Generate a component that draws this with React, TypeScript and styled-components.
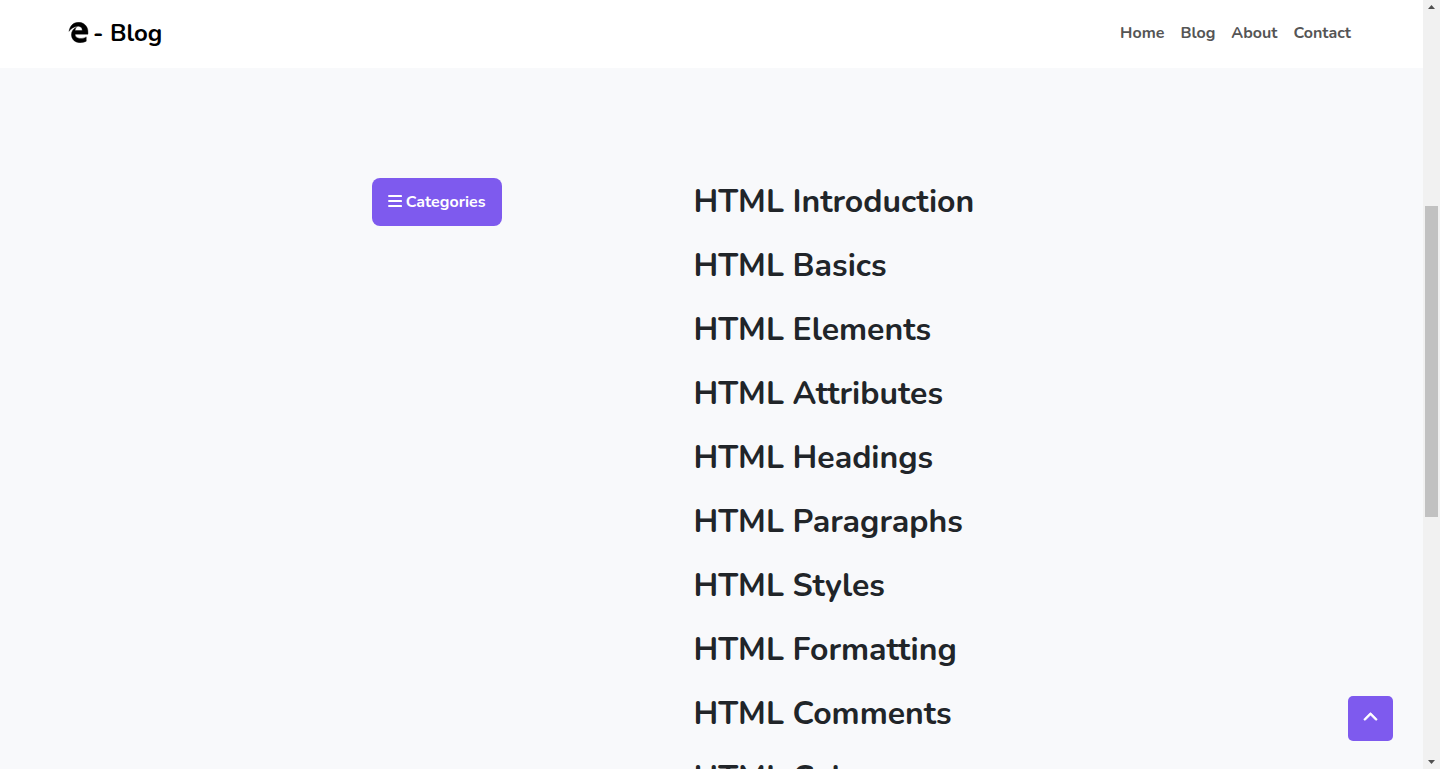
import React from "react";
import styled, { createGlobalStyle } from "styled-components";
import { FaEdgeLegacy } from "react-icons/fa";
import { FaBars, FaChevronUp } from "react-icons/fa6";

const GlobalStyle = createGlobalStyle`
  *, *::before, *::after { box-sizing: border-box; }
  body {
    margin: 0;
    background: #f8f9fb;
    color: #212529;
    font-family: Nunito, "Open Sans", "Noto Sans", sans-serif;
    font-size: 16px;
  }
`;

const Shell = styled.div`
  display: grid;
  grid-template-columns: 1fr 17px;
  height: 100vh;
  overflow: hidden;
`;

const Page = styled.div`
  display: flex;
  flex-direction: column;
  min-height: 0;
  overflow: hidden;
`;

const Header = styled.header`
  flex: none;
  display: flex;
  align-items: center;
  justify-content: space-between;
  height: 68px;
  padding: 0 72px 2px 68px;
  background: #fff;
`;

const Brand = styled.a`
  display: flex;
  align-items: center;
  gap: 4px;
  color: #000;
  font-size: 24px;
  line-height: 36px;
  font-weight: 700;
  text-decoration: none;

  svg {
    font-size: 21px;
    margin-bottom: 2px;
  }
`;

const Nav = styled.nav`
  display: flex;
  gap: 16px;
`;

const NavLink = styled.a`
  color: #555;
  font-weight: 700;
  line-height: 24px;
  text-decoration: none;
`;

const Main = styled.main`
  flex: 1;
  min-height: 0;
  overflow: hidden;
  padding-top: 110px;
`;

const Columns = styled.div`
  display: grid;
  grid-template-columns: 322px 1fr;
  align-items: start;
  max-width: 680px;
  margin: 0 auto;
`;

const CategoriesButton = styled.button`
  display: flex;
  align-items: center;
  justify-self: start;
  gap: 4px;
  width: 130px;
  height: 48px;
  padding: 0 16px;
  border: 0;
  border-radius: 8px;
  background: #7e5aee;
  color: #fff;
  font: inherit;
  font-weight: 700;
  white-space: nowrap;

  svg {
    margin-bottom: 2px;
  }
`;

const Topics = styled.div`
  display: flex;
  flex-direction: column;
  gap: 16px;
`;

const Topic = styled.h2`
  margin: 0;
  font-size: 32px;
  line-height: 48px;
  font-weight: 700;
  white-space: nowrap;
`;

const TopButton = styled.button`
  position: fixed;
  right: 47px;
  bottom: 28px;
  display: grid;
  place-items: center;
  width: 45px;
  height: 45px;
  padding: 0 0 2px;
  border: 0;
  border-radius: 5px;
  background: #7e5aee;
  color: #fff;
  font-size: 15px;
`;

const Scrollbar = styled.div`
  display: grid;
  grid-template-rows: 14px 192fr 311fr 238fr 14px;
  justify-items: center;
  align-items: center;
  background: #f1f1f1;
`;

const Thumb = styled.div`
  grid-row: 3;
  align-self: stretch;
  width: 13px;
  background: #c1c1c1;
`;

const Arrow = styled.svg<{ $row: number }>`
  grid-row: ${(p) => p.$row};
  width: 7px;
  height: 4px;
  fill: #505050;
`;

const links = ["Home", "Blog", "About", "Contact"];
const topics = [
  "Introduction",
  "Basics",
  "Elements",
  "Attributes",
  "Headings",
  "Paragraphs",
  "Styles",
  "Formatting",
  "Comments",
  "Colors",
];

export default function App() {
  return (
    <>
      <GlobalStyle />
      <Shell>
        <Page>
          <Header>
            <Brand href="#home">
              <FaEdgeLegacy aria-hidden stroke="currentColor" strokeWidth={10} />
              <span>- Blog</span>
            </Brand>
            <Nav>
              {links.map((name) => (
                <NavLink key={name} href={`#${name.toLowerCase()}`}>
                  {name}
                </NavLink>
              ))}
            </Nav>
          </Header>
          <Main>
            <Columns>
              <CategoriesButton type="button">
                <FaBars aria-hidden />
                Categories
              </CategoriesButton>
              <Topics>
                {topics.map((name) => (
                  <Topic key={name}>HTML {name}</Topic>
                ))}
              </Topics>
            </Columns>
          </Main>
        </Page>
        <Scrollbar aria-hidden>
          <Arrow $row={1} viewBox="0 0 7 4">
            <path d="M0 4 3.5 0 7 4z" />
          </Arrow>
          <Thumb />
          <Arrow $row={5} viewBox="0 0 7 4">
            <path d="M0 0 3.5 4 7 0z" />
          </Arrow>
        </Scrollbar>
      </Shell>
      <TopButton type="button" aria-label="Back to top">
        <FaChevronUp aria-hidden stroke="currentColor" strokeWidth={24} />
      </TopButton>
    </>
  );
}
